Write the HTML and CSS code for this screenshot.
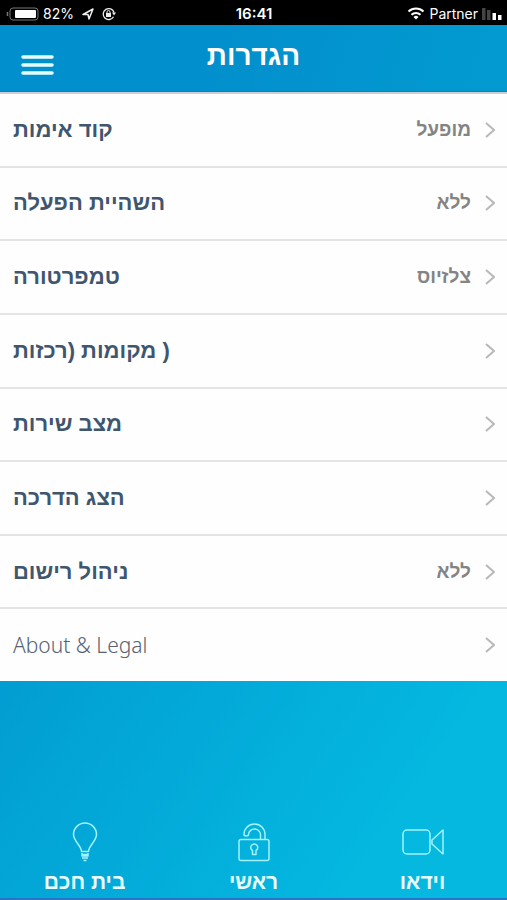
FILE: index.html
```html
<!DOCTYPE html>
<html lang="he">
<head>
<meta charset="utf-8">
<meta name="viewport" content="width=device-width, initial-scale=1">
<title>הגדרות</title>
<link rel="stylesheet" href="styles.css">
</head>
<body>
<div class="status">
  <div class="status-side">
    <svg width="33" height="16" viewBox="0 0 33 16"><path d="M1.500 6v4" stroke="#777" stroke-width="1.500"/><rect x="4" y="2" width="28" height="12" rx="3" fill="none" stroke="#777"/><rect x="9" y="4" width="21" height="8" rx="1" fill="#fff"/></svg>
    <span class="battery">82%</span>
    <svg class="arrow" width="12" height="12" viewBox="0 0 12 12"><path d="M1 6.500L11 1 7 11 6 6.500z" fill="none" stroke="#eee" stroke-width="1.500" stroke-linejoin="round"/></svg>
    <svg width="14" height="14" viewBox="0 0 14 14"><path d="M11.500 9.800A5.500 5.500 0 1 1 12 5.500" fill="none" stroke="#eee" stroke-width="1.300"/><path d="M10 5.500h4L12 8.500z" fill="#eee"/><path d="M5 6.500V5a1.500 1.500 0 0 1 3 0v1.500" fill="none" stroke="#eee"/><rect x="4" y="6" width="5" height="4" fill="#eee"/></svg>
  </div>
  <span class="clock">16:41</span>
  <div class="status-side status-end">
    <svg width="18" height="13" viewBox="0 0 18 13" fill="none" stroke="#fff" stroke-width="2"><path d="M1.500 4.500a11 11 0 0 1 15 0M4.500 7.700a6.500 6.500 0 0 1 9 0"/><path d="M6.500 10a3.700 3.700 0 0 1 5 0L9 12.500z" fill="#fff" stroke="none"/></svg>
    <span class="carrier">Partner</span>
    <svg width="20" height="12" viewBox="0 0 20 12"><path d="M0 0h3.500v12H0zM5 2h3.500v10H5z" fill="#444"/><path d="M10.500 5h3.500v7h-3.500zM16 7h3.500v5H16z" fill="#fff"/></svg>
  </div>
</div>
<header class="header">
  <button class="menu" type="button" aria-label="תפריט"><svg width="34" height="22" viewBox="0 0 34 22"><path d="M3 3h29M3 11h29M3 19h29" stroke="#e4ffff" stroke-width="3.500" stroke-linecap="round"/></svg></button>
  <h1>הגדרות</h1>
</header>
<main class="settings">
  <a class="row" href="#"><span class="name">קוד אימות</span><span class="value">מופעל</span><svg class="chevron" viewBox="0 0 10 16"><path d="M1 1l8 7-8 7"/></svg></a>
  <a class="row" href="#"><span class="name">השהיית הפעלה</span><span class="value">ללא</span><svg class="chevron" viewBox="0 0 10 16"><path d="M1 1l8 7-8 7"/></svg></a>
  <a class="row" href="#"><span class="name">טמפרטורה</span><span class="value">צלזיוס</span><svg class="chevron" viewBox="0 0 10 16"><path d="M1 1l8 7-8 7"/></svg></a>
  <a class="row" href="#"><span class="name"><bdi>מקומות (רכזות</bdi> )</span><svg class="chevron" viewBox="0 0 10 16"><path d="M1 1l8 7-8 7"/></svg></a>
  <a class="row" href="#"><span class="name">מצב שירות</span><svg class="chevron" viewBox="0 0 10 16"><path d="M1 1l8 7-8 7"/></svg></a>
  <a class="row" href="#"><span class="name">הצג הדרכה</span><svg class="chevron" viewBox="0 0 10 16"><path d="M1 1l8 7-8 7"/></svg></a>
  <a class="row" href="#"><span class="name">ניהול רישום</span><span class="value">ללא</span><svg class="chevron" viewBox="0 0 10 16"><path d="M1 1l8 7-8 7"/></svg></a>
  <a class="row" href="#"><span class="name latin">About &amp; Legal</span><svg class="chevron" viewBox="0 0 10 16"><path d="M1 1l8 7-8 7"/></svg></a>
</main>
<nav class="tabs">
  <a class="tab" href="#">
    <svg width="42" height="40" viewBox="0 0 42 40"><path d="M17.500 29.500C17.500 24 9.500 19 9.500 12.500a11.500 11.500 0 0 1 23 0C32.500 19 24.500 24 24.500 29.500z"/><path d="M18 31v3h6v-3M17.500 32.500h7M18 36h6M19.500 38.500h3"/></svg>
    <span>בית חכם</span>
  </a>
  <a class="tab" href="#">
    <svg width="42" height="40" viewBox="0 0 42 40"><rect x="6" y="17.500" width="30" height="21" rx="2"/><path d="M27.500 17.500v-4a6 6 0 0 0-12-1c0 2-4.500 2-4.500 0a10.500 10.500 0 0 1 21 0v5"/><path d="M19.500 28.500a3.500 3.500 0 1 1 3.500 0v4h-3.500z"/></svg>
    <span>ראשי</span>
  </a>
  <a class="tab" href="#">
    <svg width="42" height="40" viewBox="0 0 42 40"><rect x="1" y="8" width="27" height="24" rx="4"/><path d="M41 8v24L30 22v-4z"/></svg>
    <span>וידאו</span>
  </a>
</nav>
</body>
</html>
```
FILE: styles.css
```css
* { box-sizing: border-box; }

body {
  margin: 0;
  min-height: 100vh;
  display: flex;
  flex-direction: column;
  font-family: "Liberation Sans", "Open Sans", sans-serif;
  background: #fff;
}

a { color: inherit; text-decoration: none; }
svg { flex: none; display: block; }

.status {
  height: 25px;
  padding: 2px 5px 0 6px;
  display: flex;
  align-items: center;
  background: #000;
  color: #fff;
  font: 14px Inter, sans-serif;
}
.status-side { flex: 1; display: flex; align-items: center; gap: 4px; }
.status-end { justify-content: flex-end; }
.arrow { margin: 0 4px; }
.clock { font-size: 15px; font-weight: 600; }

.header {
  height: 67px;
  padding: 0 20px;
  display: grid;
  grid-template-columns: 1fr auto 1fr;
  align-items: center;
  background: linear-gradient(110deg, #028fcd 40%, #029bd1);
  border-bottom: 1px solid #0784b8;
  color: #fff;
}
.header h1 { margin: 0; padding-bottom: 4px; font-size: 28px; line-height: 32px; }
.menu { justify-self: start; padding: 13px 0 0; border: 0; background: none; }

.settings {
  flex: 1;
  display: flex;
  flex-direction: column;
  border-top: 2px solid #c9d0d3;
}
.row {
  flex: 1;
  padding: 0 12px 0 13px;
  display: flex;
  align-items: center;
  border-bottom: 2px solid #e3e4e5;
  background: #fefefe;
}
.row:last-child { border-bottom: 0; }
.name { flex: 1; color: #40566f; font-size: 22px; font-weight: 700; line-height: 30px; }
.latin { font-family: "Noto Sans", sans-serif; font-size: 21px; font-weight: 300; color: #566273; }
.value { color: #848484; font-size: 19px; font-weight: 700; line-height: 28px; }
.chevron { width: 10px; height: 16px; margin-left: 14px; fill: none; stroke: #b8b8b8; stroke-width: 2; }

.tabs {
  height: 219px;
  padding-bottom: 2px;
  display: grid;
  grid-template-columns: repeat(3, 1fr);
  align-items: end;
  background: linear-gradient(125deg, #029dd2, #04b8e0 75%);
  border-bottom: 2px solid #2874c5;
  color: #e8ffff;
}
.tab { display: flex; flex-direction: column; align-items: center; gap: 6px; font-size: 21px; font-weight: 700; line-height: 28px; }
.tab svg { fill: none; stroke: #a0f3ff; stroke-width: 1.5; stroke-linejoin: round; }
```
